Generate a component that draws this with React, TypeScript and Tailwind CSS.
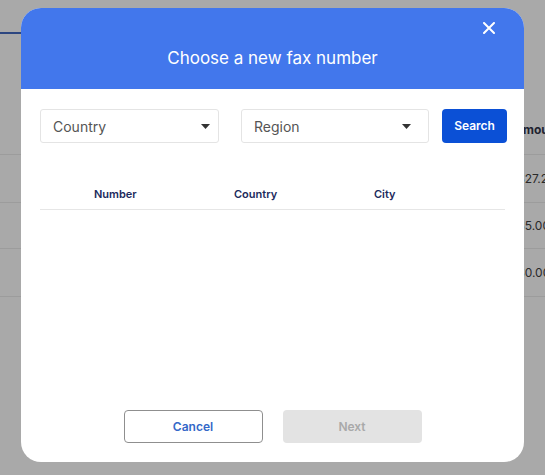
import React from "react";

function Caret() {
  return (
    <svg width="9" height="5" viewBox="0 0 9 5" className="shrink-0">
      <path d="M0 0 L9 0 L4.5 5 Z" fill="#333" />
    </svg>
  );
}

export default function App() {
  const rows = [
    { v: "$27.20", h: "h-[48px]" },
    { v: "$5.00", h: "h-[46px]" },
    { v: "$0.00", h: "h-[48px]" },
  ];
  return (
    <div
      className="relative w-[545px] h-[475px] overflow-hidden bg-[#a9a9a9]"
      style={{ fontFamily: "Inter, 'Noto Sans', sans-serif" }}
    >
      {/* underlying page (dimmed) */}
      <div className="flex flex-col">
        <div className="h-[32px]" />
        <div className="h-[2px] w-[200px] bg-[#2c4680]" />
        <div className="h-[121px] flex items-end pb-[15px] pl-[514px] border-b border-[#9c9c9c]">
          <span className="text-[12px] font-bold text-[#1f2330] whitespace-nowrap">Amount</span>
        </div>
        {rows.map((r) => (
          <div
            key={r.v}
            className={`${r.h} flex items-center pl-[517px] border-b border-[#9c9c9c]`}
          >
            <span className="text-[12px] text-[#2a2a2a] whitespace-nowrap">{r.v}</span>
          </div>
        ))}
      </div>

      {/* modal */}
      <div className="absolute left-[21px] top-[8px] w-[503px] h-[454px] rounded-[20px] bg-white overflow-hidden flex flex-col">
        <div className="relative h-[81px] bg-[#4277ec] flex items-end justify-center pb-[22px] shrink-0">
          <h2 className="text-[17px] text-white font-normal leading-none">
            Choose a new fax number
          </h2>
          <button className="absolute right-[29px] top-[14px] w-[12px] h-[12px] flex items-center justify-center">
            <svg width="12" height="12" viewBox="0 0 12 12">
              <path d="M1 1 L11 11 M11 1 L1 11" stroke="white" strokeWidth="2" strokeLinecap="round" />
            </svg>
          </button>
        </div>

        <div className="flex-1 flex flex-col px-[19px] pt-[20px] pb-[19px]">
          <div className="flex items-center">
            <div className="w-[179px] shrink-0 h-[34px] border border-[#e4e4e4] rounded-[3px] flex items-center justify-between pl-[12px] pr-[8px]">
              <span className="text-[14px] text-[#555]">Country</span>
              <Caret />
            </div>
            <div className="ml-[22px] shrink-0 w-[188px] h-[34px] border border-[#e4e4e4] rounded-[3px] flex items-center justify-between pl-[12px] pr-[17px]">
              <span className="text-[14px] text-[#555]">Region</span>
              <Caret />
            </div>
            <button className="ml-[13px] shrink-0 w-[65px] h-[34px] rounded-[4px] bg-[#0b50d6] text-white text-[12px] font-semibold">
              Search
            </button>
          </div>

          <div className="mt-[43px] flex items-center h-[24px] border-b border-[#e6e6e6] pl-[54px] pb-[6px]">
            <span className="w-[140px] shrink-0 text-[11px] font-semibold text-[#1b2a5c]">Number</span>
            <span className="w-[140px] shrink-0 text-[11px] font-semibold text-[#1b2a5c]">Country</span>
            <span className="w-[100px] shrink-0 text-[11px] font-semibold text-[#1b2a5c]">City</span>
          </div>

          <div className="flex-1" />

          <div className="flex justify-center gap-[20px]">
            <button className="w-[139px] h-[33px] rounded-[4px] border border-[#8f8f8f] bg-white text-[12px] font-semibold text-[#3468c8]">
              Cancel
            </button>
            <button className="w-[139px] h-[33px] rounded-[4px] bg-[#e3e3e3] text-[12px] font-semibold text-[#a9a9a9]">
              Next
            </button>
          </div>
        </div>
      </div>
    </div>
  );
}
